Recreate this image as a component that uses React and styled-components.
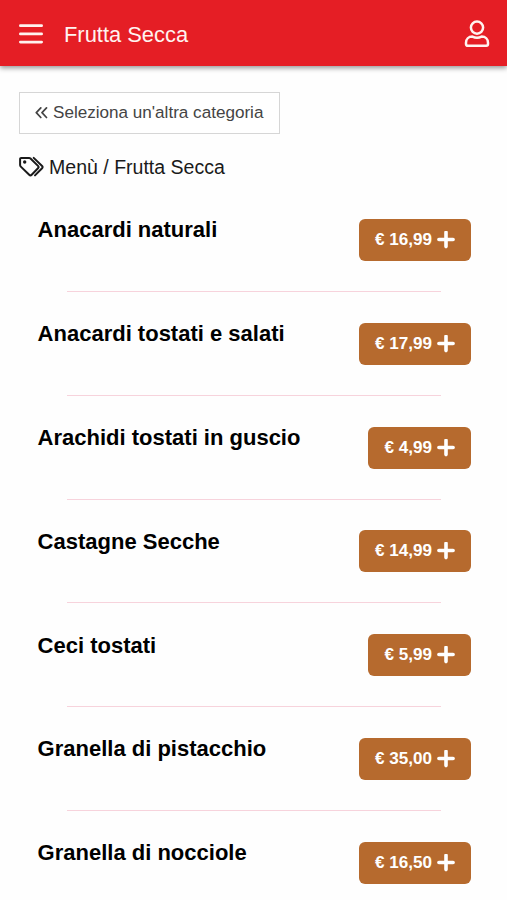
import React from "react";
import styled, { createGlobalStyle } from "styled-components";

const products = [
  { name: "Anacardi naturali", price: "16,99" },
  { name: "Anacardi tostati e salati", price: "17,99" },
  { name: "Arachidi tostati in guscio", price: "4,99" },
  { name: "Castagne Secche", price: "14,99" },
  { name: "Ceci tostati", price: "5,99" },
  { name: "Granella di pistacchio", price: "35,00" },
  { name: "Granella di nocciole", price: "16,50" },
];

const GlobalStyle = createGlobalStyle`
  * {
    box-sizing: border-box;
  }

  body {
    margin: 0;
    background: #fefefe;
    color: #000;
    font-family: "Liberation Sans", Arial, sans-serif;
  }

  svg {
    display: block;
    flex-shrink: 0;
  }

  button {
    font-family: inherit;
    cursor: pointer;
  }
`;

const Page = styled.div`
  height: 900px;
  overflow: hidden;
`;

const TopBar = styled.header`
  display: flex;
  align-items: center;
  height: 66px;
  padding: 2px 17px 0 18px;
  background: #e51e25;
  color: #fff3f0;
  box-shadow: 0 2px 5px rgba(0, 0, 0, 0.42);
`;

const IconButton = styled.button`
  padding: 0;
  border: 0;
  background: none;
  color: inherit;
`;

const Title = styled.h1`
  flex: 1;
  margin: 1px 0 0 20px;
  font-size: 21.9px;
  font-weight: 400;
  line-height: 26px;
`;

const Content = styled.main`
  padding: 26px 36px 0 19px;
`;

const BackButton = styled.button`
  display: flex;
  align-items: center;
  gap: 5px;
  width: 261px;
  height: 42px;
  padding: 0 0 0 15px;
  border: 1px solid #d6d6d6;
  background: #fff;
  color: #444;
  font-size: 17.1px;
  white-space: nowrap;
`;

const Breadcrumb = styled.div`
  display: flex;
  align-items: center;
  gap: 4px;
  height: 26px;
  margin-top: 20px;
  color: #1a1a1a;
  font-size: 19.55px;
`;

const List = styled.ul`
  margin: 39px 0 0;
  padding: 0 0 0 19px;
  list-style: none;
`;

const Item = styled.li`
  height: 103.8px;
`;

const Row = styled.div`
  display: flex;
  align-items: flex-start;
  justify-content: space-between;
  height: 72px;
`;

const Name = styled.h2`
  margin: -1.6px 0 0 -0.4px;
  font-size: 22px;
  font-weight: 700;
  line-height: 26px;
`;

const PriceButton = styled.button`
  display: flex;
  align-items: center;
  gap: 5px;
  height: 42px;
  padding: 0 16px;
  border: 0;
  border-radius: 6px;
  background: #b66a2e;
  color: #fff;
  font-size: 17.1px;
  font-weight: 700;
`;

const Divider = styled.hr`
  height: 1px;
  margin: 0 30px 0 29px;
  border: 0;
  background: #f7d3dc;
`;

const MenuIcon = () => (
  <svg width="26" height="22" viewBox="0 0 26 22" fill="none" stroke="currentColor" strokeWidth="2.8" strokeLinecap="round">
    <path d="M2.4 2.7h21.2M2.4 10.9h21.2M2.4 19.1h21.2" />
  </svg>
);

const UserIcon = () => (
  <svg width="26" height="28" viewBox="0 0 26 28" fill="none" stroke="currentColor" strokeWidth="2.5" strokeLinejoin="round">
    <circle cx="13" cy="7.6" r="6.1" />
    <path d="M8.4 16.6c2.7 1.4 6.5 1.4 9.2 0 3.9 0 6.4 2.6 6.4 6.2v1.3c0 1-.7 1.7-1.7 1.7H3.7c-1 0-1.7-.7-1.7-1.7v-1.3c0-3.6 2.5-6.2 6.4-6.2z" />
  </svg>
);

const BackIcon = () => (
  <svg width="13" height="13" viewBox="0 0 13 13" fill="none" stroke="currentColor" strokeWidth="1.7" strokeLinecap="round" strokeLinejoin="round">
    <path d="M5.8 .9 1.3 5.7l4.5 4.8M11.5 .9 7 5.7l4.5 4.8" />
  </svg>
);

const TagsIcon = () => (
  <svg width="26" height="22" viewBox="0 0 26 22" fill="none" stroke="currentColor" strokeWidth="2" strokeLinecap="round" strokeLinejoin="round">
    <path d="M2.2 1.9h7.8c.6 0 1.1.2 1.5.6l7.5 7.4c.8.8.8 1.6 0 2.4l-6.3 6.4c-.8.8-1.7.8-2.5 0l-8.4-8.1c-.5-.5-.7-.9-.7-1.5V3c0-.7.4-1.1 1.1-1.1z" />
    <path d="M14.7 1.9l8.4 8.1c.7.7.7 1.5 0 2.2l-7.1 7.2" />
    <circle cx="5.7" cy="6" r="1.7" fill="currentColor" stroke="none" />
  </svg>
);

const PlusIcon = () => (
  <svg width="18" height="18" viewBox="0 0 18 18" fill="none" stroke="currentColor" strokeWidth="3.6" strokeLinecap="round">
    <path d="M9 1.4v14.2M1.9 8.5h14.2" />
  </svg>
);

const Product = ({ name, price, last }) => (
  <Item>
    <Row>
      <Name>{name}</Name>
      <PriceButton>
        <span>€ {price}</span>
        <PlusIcon />
      </PriceButton>
    </Row>
    {!last && <Divider />}
  </Item>
);

const App = () => {
  return (
    <Page>
      <GlobalStyle />
      <TopBar>
        <IconButton aria-label="Menù"><MenuIcon /></IconButton>
        <Title>Frutta Secca</Title>
        <IconButton aria-label="Profilo"><UserIcon /></IconButton>
      </TopBar>
      <Content>
        <BackButton>
          <BackIcon />
          <span>Seleziona un'altra categoria</span>
        </BackButton>
        <Breadcrumb>
          <TagsIcon />
          <span>Menù / Frutta Secca</span>
        </Breadcrumb>
        <List>
          {products.map((item, index) => (
            <Product key={item.name} name={item.name} price={item.price} last={index === products.length - 1} />
          ))}
        </List>
      </Content>
    </Page>
  );
};

export default App;
